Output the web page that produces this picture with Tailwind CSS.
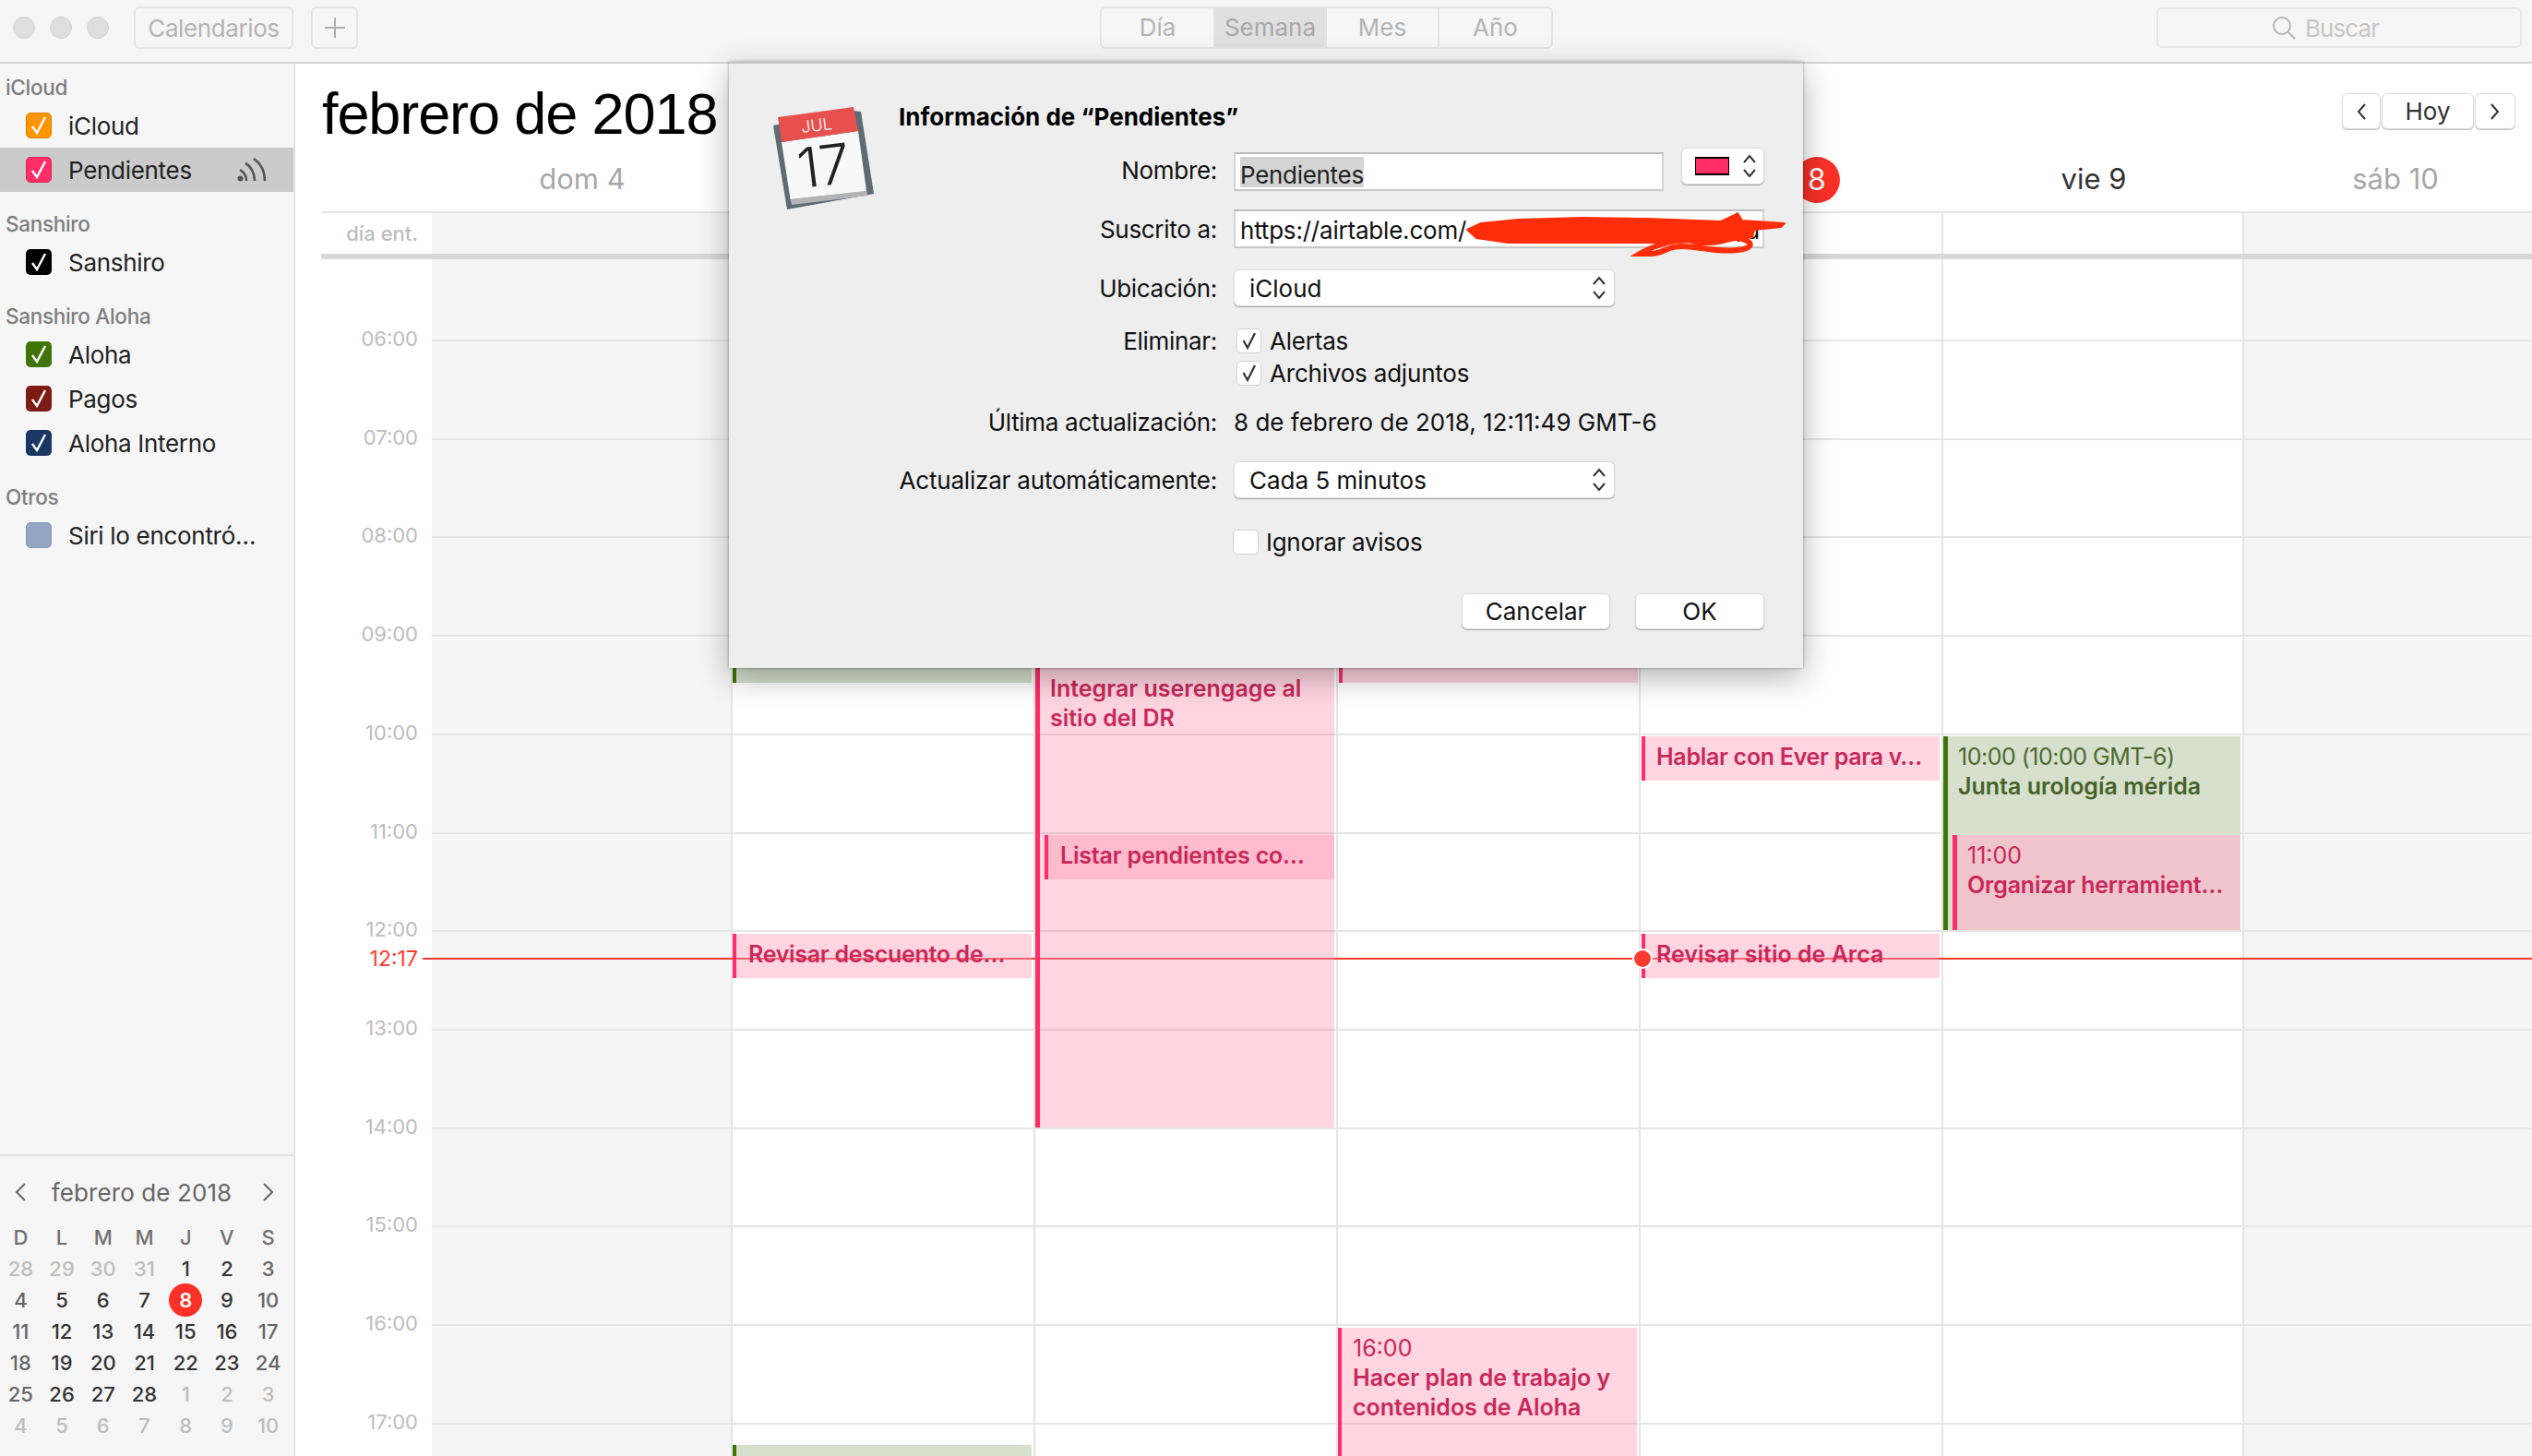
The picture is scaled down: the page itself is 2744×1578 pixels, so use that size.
<!DOCTYPE html>
<html lang="es">
<head>
<meta charset="utf-8">
<title>Calendario</title>
<script src="https://cdn.jsdelivr.net/npm/@tailwindcss/browser@4"></script>
</head>
<body>
<div class="relative w-[2744px] h-[1578px] overflow-hidden flex flex-col bg-white font-['Inter',sans-serif] text-[26px] text-[#222]">

  <!-- toolbar -->
  <header class="h-[69px] shrink-0 flex items-start bg-[#f6f6f6] border-b-2 border-[#d6d6d6] text-[#b4b4b4] relative">
    <div class="flex gap-[16px] pl-[14px] pt-[18px]">
      <span class="w-[24px] h-[24px] rounded-full bg-[#dedede] border border-[#d2d2d2]"></span>
      <span class="w-[24px] h-[24px] rounded-full bg-[#dedede] border border-[#d2d2d2]"></span>
      <span class="w-[24px] h-[24px] rounded-full bg-[#dedede] border border-[#d2d2d2]"></span>
    </div>
    <div class="ml-[27px] mt-[7px] w-[173px] h-[46px] rounded-[6px] border-2 border-[#e4e4e4] flex items-center justify-center tracking-[-0.4px]">Calendarios</div>
    <div class="ml-[19px] mt-[7px] w-[51px] h-[46px] rounded-[6px] border-2 border-[#e4e4e4] flex items-center justify-center">
      <svg width="24" height="24" viewBox="0 0 24 24"><path d="M12 1V23M1 12H23" stroke="#b0b0b0" stroke-width="2" fill="none"/></svg>
    </div>
    <div class="ml-[804px] mt-[7px] w-[491px] h-[46px] rounded-[6px] border-2 border-[#e4e4e4] grid grid-cols-[123px_121px_122px_1fr] overflow-hidden text-center leading-[42px]">
      <div class="border-r-2 border-[#e4e4e4]">Día</div>
      <div class="border-r-2 border-[#e4e4e4] bg-[#e0e0e0] text-[#a8a8a8]">Semana</div>
      <div class="border-r-2 border-[#e4e4e4]">Mes</div>
      <div>Año</div>
    </div>
    <div class="ml-[654px] mt-[8px] w-[396px] h-[44px] rounded-[6px] border-2 border-[#e6e6e6] flex items-center justify-center gap-[10px] text-[#c6c6c6] pr-[30px] tracking-[-0.9px]">
      <svg width="26" height="26" viewBox="0 0 26 26"><circle cx="11" cy="11" r="9" stroke="#b4b4b4" stroke-width="2" fill="none"/><path d="M17.5 17.5L25 25" stroke="#b4b4b4" stroke-width="2"/></svg>
      <span>Buscar</span>
    </div>
  </header>

  <div class="flex flex-1 min-h-0">
    <!-- sidebar -->
    <aside class="w-[320px] shrink-0 bg-[#f6f6f6] border-r-2 border-[#e2e2e2] flex flex-col justify-between tracking-[-0.3px]">
      <div class="pt-[6px]">
        <div class="h-[37px] flex items-center pl-[6px] pt-[2px] text-[22.5px] font-medium text-[#7e7e7e]">iCloud</div>
        <div class="h-[48px] flex items-center pl-[28px] gap-[18px]">
          <span class="w-[28px] h-[28px] rounded-[5px] bg-[#ff9500] border border-[#d87e00] flex items-center justify-center"><svg width="18" height="20" viewBox="0 0 18 20"><path d="M2 11L7 18L16 1" stroke="#fff" stroke-width="2.4" fill="none"/></svg></span>
          <span>iCloud</span>
        </div>
        <div class="h-[48px] flex items-center pl-[28px] gap-[18px] bg-[#cbcbcb] relative">
          <span class="w-[28px] h-[28px] rounded-[5px] bg-[#ff2d68] border border-[#d42556] flex items-center justify-center"><svg width="18" height="20" viewBox="0 0 18 20"><path d="M2 11L7 18L16 1" stroke="#fff" stroke-width="2.4" fill="none"/></svg></span>
          <span>Pendientes</span>
          <svg class="ml-auto mr-[29px]" width="32" height="26" viewBox="0 0 32 26"><circle cx="3.5" cy="22.5" r="3" fill="#555"/><path d="M10 25C10 20 8 16 3 13M19 25C19 17 15 9 9 6M30 25C30 14 25 6 18 1" stroke="#555" stroke-width="2.6" fill="none"/></svg>
        </div>

        <div class="mt-[15px] h-[37px] flex items-center pl-[6px] pt-[2px] text-[22.5px] font-medium text-[#7e7e7e]">Sanshiro</div>
        <div class="h-[48px] flex items-center pl-[28px] gap-[18px]">
          <span class="w-[28px] h-[28px] rounded-[5px] bg-black flex items-center justify-center"><svg width="18" height="20" viewBox="0 0 18 20"><path d="M2 11L7 18L16 1" stroke="#fff" stroke-width="2.4" fill="none"/></svg></span>
          <span>Sanshiro</span>
        </div>

        <div class="mt-[15px] h-[37px] flex items-center pl-[6px] pt-[2px] text-[22.5px] font-medium text-[#7e7e7e]">Sanshiro Aloha</div>
        <div class="h-[48px] flex items-center pl-[28px] gap-[18px]">
          <span class="w-[28px] h-[28px] rounded-[5px] bg-[#3e7506] flex items-center justify-center"><svg width="18" height="20" viewBox="0 0 18 20"><path d="M2 11L7 18L16 1" stroke="#fff" stroke-width="2.4" fill="none"/></svg></span>
          <span>Aloha</span>
        </div>
        <div class="h-[48px] flex items-center pl-[28px] gap-[18px]">
          <span class="w-[28px] h-[28px] rounded-[5px] bg-[#7c1c14] flex items-center justify-center"><svg width="18" height="20" viewBox="0 0 18 20"><path d="M2 11L7 18L16 1" stroke="#fff" stroke-width="2.4" fill="none"/></svg></span>
          <span>Pagos</span>
        </div>
        <div class="h-[48px] flex items-center pl-[28px] gap-[18px]">
          <span class="w-[28px] h-[28px] rounded-[5px] bg-[#1a3764] flex items-center justify-center"><svg width="18" height="20" viewBox="0 0 18 20"><path d="M2 11L7 18L16 1" stroke="#fff" stroke-width="2.4" fill="none"/></svg></span>
          <span>Aloha Interno</span>
        </div>

        <div class="mt-[15px] h-[37px] flex items-center pl-[6px] pt-[2px] text-[22.5px] font-medium text-[#7e7e7e]">Otros</div>
        <div class="h-[48px] flex items-center pl-[28px] gap-[18px]">
          <span class="w-[28px] h-[28px] rounded-[5px] bg-[#94a6c2] border border-[#8598b5]"></span>
          <span>Siri lo encontró…</span>
        </div>
      </div>

      <!-- mini month -->
      <div class="h-[327px] border-t-2 border-[#e2e2e2] pt-[14px]">
        <div class="h-[50px] flex items-center justify-between pl-[15px] pr-[20px] text-[#666] tracking-[0.1px]">
          <svg width="14" height="22" viewBox="0 0 14 22"><path d="M12 2L3 11L12 20" stroke="#666" stroke-width="2" fill="none"/></svg>
          <span class="-translate-x-[3px]">febrero de 2018</span>
          <svg width="14" height="22" viewBox="0 0 14 22"><path d="M2 2L11 11L2 20" stroke="#666" stroke-width="2" fill="none"/></svg>
        </div>
        <div class="mt-[7px] w-[313px] grid grid-cols-7 auto-rows-[34px] items-center text-center text-[22px] font-medium tracking-normal">
          <span class="text-[#707070]">D</span><span class="text-[#707070]">L</span><span class="text-[#707070]">M</span><span class="text-[#707070]">M</span><span class="text-[#707070]">J</span><span class="text-[#707070]">V</span><span class="text-[#707070]">S</span>
          <span class="text-[#bdbdbd]">28</span><span class="text-[#bdbdbd]">29</span><span class="text-[#bdbdbd]">30</span><span class="text-[#bdbdbd]">31</span><span class="text-[#333]">1</span><span class="text-[#333]">2</span><span class="text-[#666]">3</span>
          <span class="text-[#666]">4</span><span class="text-[#333]">5</span><span class="text-[#333]">6</span><span class="text-[#333]">7</span><span class="mx-auto w-[36px] h-[36px] rounded-full bg-[#fb3026] text-white font-semibold leading-[36px]">8</span><span class="text-[#333]">9</span><span class="text-[#666]">10</span>
          <span class="text-[#666]">11</span><span class="text-[#333]">12</span><span class="text-[#333]">13</span><span class="text-[#333]">14</span><span class="text-[#333]">15</span><span class="text-[#333]">16</span><span class="text-[#666]">17</span>
          <span class="text-[#666]">18</span><span class="text-[#333]">19</span><span class="text-[#333]">20</span><span class="text-[#333]">21</span><span class="text-[#333]">22</span><span class="text-[#333]">23</span><span class="text-[#666]">24</span>
          <span class="text-[#666]">25</span><span class="text-[#333]">26</span><span class="text-[#333]">27</span><span class="text-[#333]">28</span><span class="text-[#bdbdbd]">1</span><span class="text-[#bdbdbd]">2</span><span class="text-[#bdbdbd]">3</span>
          <span class="text-[#bdbdbd]">4</span><span class="text-[#bdbdbd]">5</span><span class="text-[#bdbdbd]">6</span><span class="text-[#bdbdbd]">7</span><span class="text-[#bdbdbd]">8</span><span class="text-[#bdbdbd]">9</span><span class="text-[#bdbdbd]">10</span>
        </div>
      </div>
    </aside>

    <!-- main -->
    <main class="flex-1 min-w-0 flex flex-col overflow-hidden">
      <div class="h-[91px] shrink-0 flex justify-between items-start pl-[29px] pr-[18px]">
        <h1 class="text-[63px] leading-[108px] font-normal text-black whitespace-nowrap font-['Liberation_Sans',sans-serif] tracking-[-1.1px]">febrero de 2018</h1>
        <div class="flex gap-[1px] mt-[32px] text-[#333]">
          <span class="w-[42px] h-[39px] rounded-[6px] bg-white border border-[#dcdcdc] shadow-[0_1px_1px_rgba(0,0,0,.25)] flex items-center justify-center"><svg width="12" height="20" viewBox="0 0 12 20"><path d="M10 2L3 10L10 18" stroke="#333" stroke-width="2" fill="none"/></svg></span>
          <span class="w-[100px] h-[39px] rounded-[6px] bg-white border border-[#dcdcdc] shadow-[0_1px_1px_rgba(0,0,0,.25)] flex items-center justify-center">Hoy</span>
          <span class="w-[44px] h-[39px] rounded-[6px] bg-white border border-[#dcdcdc] shadow-[0_1px_1px_rgba(0,0,0,.25)] flex items-center justify-center"><svg width="12" height="20" viewBox="0 0 12 20"><path d="M2 2L9 10L2 18" stroke="#333" stroke-width="2" fill="none"/></svg></span>
        </div>
      </div>

      <!-- day header -->
      <div class="h-[69px] shrink-0 ml-[148px] w-[2292px] grid grid-cols-[326px_328px_328px_328px_328px_326px_328px] items-center text-center text-[31px] text-[#a8a8a8]">
        <div>dom 4</div><div></div><div></div><div></div>
        <div class="flex justify-end pr-[112px]"><span class="w-[50px] h-[50px] rounded-full bg-[#fb3026] text-white text-[32px] leading-[50px]">8</span></div>
        <div class="text-[#333]">vie 9</div>
        <div>sáb 10</div>
      </div>

      <!-- all-day row -->
      <div class="h-[52px] shrink-0 ml-[28px] border-t-2 border-b-[6px] border-t-[#e4e4e4] border-b-[#d8d8d8] flex">
        <div class="w-[120px] shrink-0 text-right pr-[15px] text-[22px] font-medium leading-[44px] text-[#bdbdbd]">día ent.</div>
        <div class="w-[2292px] shrink-0 grid grid-cols-[326px_328px_328px_328px_328px_326px_328px]">
          <div class="bg-[#f5f5f5] border-r-2 border-[#e5e5e5]"></div><div class="border-r-2 border-[#e5e5e5]"></div><div class="border-r-2 border-[#e5e5e5]"></div><div class="border-r-2 border-[#e5e5e5]"></div><div class="border-r-2 border-[#e5e5e5]"></div><div class="border-r-2 border-[#e5e5e5]"></div><div class="bg-[#f5f5f5]"></div>
        </div>
      </div>

      <!-- timeline -->
      <div class="relative flex-1 min-h-0">
        <div class="absolute inset-y-0 left-[148px] w-[2292px] grid grid-cols-[326px_328px_328px_328px_328px_326px_328px]">
          <div class="bg-[#f5f5f5] border-r-2 border-[#e5e5e5]"></div><div class="border-r-2 border-[#e5e5e5]"></div><div class="border-r-2 border-[#e5e5e5]"></div><div class="border-r-2 border-[#e5e5e5]"></div><div class="border-r-2 border-[#e5e5e5]"></div><div class="border-r-2 border-[#e5e5e5]"></div><div class="bg-[#f5f5f5]"></div>
        </div>
        <div class="relative ml-[148px] text-[22px] text-[#bdbdbd]">
          <div class="relative h-[89px] border-b-2 border-[#e5e5e5]"><span class="absolute right-[calc(100%+15px)] -bottom-[16px]">06:00</span></div>
          <div class="relative h-[106.73px] border-b-2 border-[#e5e5e5]"><span class="absolute right-[calc(100%+15px)] -bottom-[16px]">07:00</span></div>
          <div class="relative h-[106.73px] border-b-2 border-[#e5e5e5]"><span class="absolute right-[calc(100%+15px)] -bottom-[16px]">08:00</span></div>
          <div class="relative h-[106.73px] border-b-2 border-[#e5e5e5]"><span class="absolute right-[calc(100%+15px)] -bottom-[16px]">09:00</span></div>
          <div class="relative h-[106.73px] border-b-2 border-[#e5e5e5]"><span class="absolute right-[calc(100%+15px)] -bottom-[16px]">10:00</span></div>
          <div class="relative h-[106.73px] border-b-2 border-[#e5e5e5]"><span class="absolute right-[calc(100%+15px)] -bottom-[16px]">11:00</span></div>
          <div class="relative h-[106.73px] border-b-2 border-[#e5e5e5]"><span class="absolute right-[calc(100%+15px)] -bottom-[16px]">12:00</span></div>
          <div class="relative h-[106.73px] border-b-2 border-[#e5e5e5]"><span class="absolute right-[calc(100%+15px)] -bottom-[16px]">13:00</span></div>
          <div class="relative h-[106.73px] border-b-2 border-[#e5e5e5]"><span class="absolute right-[calc(100%+15px)] -bottom-[16px]">14:00</span></div>
          <div class="relative h-[106.73px] border-b-2 border-[#e5e5e5]"><span class="absolute right-[calc(100%+15px)] -bottom-[16px]">15:00</span></div>
          <div class="relative h-[106.73px] border-b-2 border-[#e5e5e5]"><span class="absolute right-[calc(100%+15px)] -bottom-[16px]">16:00</span></div>
          <div class="relative h-[106.73px] border-b-2 border-[#e5e5e5]"><span class="absolute right-[calc(100%+15px)] -bottom-[16px]">17:00</span></div>
        </div>
      </div>
    </main>
  </div>

  <!-- now line -->
  <div class="absolute left-[458px] top-[1038px] w-[2286px] h-[2px] bg-[linear-gradient(to_right,#ff3b30_0,#ff3b30_336px,#ff7070_336px,#ff7070_660px,#ff3b30_660px,#ff3b30_664px,#ff7070_664px,#ff7070_988px,#ff3b30_988px,#ff3b30_1321px,#ff7070_1321px,#ff7070_1644px,#ff3b30_1644px)]"></div>
  <span class="absolute left-[393px] top-[1026px] w-[60px] text-right text-[23px] leading-[26px] text-[#ff3b30]">12:17</span>

  <!-- events -->
  <div class="absolute left-[794px] top-[690px] w-[324px] h-[50px] bg-[#d6e0cc] border-l-[4px] border-[#3e7506]"></div>
  <div class="absolute left-[1451px] top-[690px] w-[324px] h-[50px] bg-[#ff2d68]/20 border-l-[4px] border-[#ff2d68]"></div>

  <div class="absolute left-[1122px] top-[690px] w-[324px] h-[532px] bg-[#ff2d68]/20 border-l-[5px] border-[#ff2d68] pl-[11px] pt-[40px] text-[25px] leading-[32px] font-semibold text-[#c9285a]">Integrar userengage al<br>sitio del DR</div>
  <div class="absolute left-[1132px] top-[905px] w-[314px] h-[48px] bg-[#ff2d68]/15 border-l-[4px] border-[#ff2d68] pl-[13px] pt-[6px] text-[25px] leading-[32px] font-semibold text-[#c9285a] whitespace-nowrap tracking-[-0.2px]">Listar pendientes co…</div>
  <div class="absolute left-[794px] top-[1012px] w-[324px] h-[48px] bg-[#ff2d68]/20 border-l-[4px] border-[#ff2d68] pl-[13px] pt-[6px] text-[25px] leading-[32px] font-semibold text-[#c9285a] whitespace-nowrap tracking-[-0.3px]">Revisar descuento de…</div>
  <div class="absolute left-[1779px] top-[798px] w-[323px] h-[48px] bg-[#ff2d68]/20 border-l-[4px] border-[#ff2d68] pl-[12px] pt-[6px] text-[25px] leading-[32px] font-semibold text-[#c9285a] whitespace-nowrap tracking-[-0.3px]">Hablar con Ever para v…</div>
  <div class="absolute left-[1779px] top-[1012px] w-[323px] h-[48px] bg-[#ff2d68]/20 border-l-[4px] border-[#ff2d68] pl-[12px] pt-[6px] text-[25px] leading-[32px] font-semibold text-[#c9285a] whitespace-nowrap">Revisar sitio de Arca</div>
  <div class="absolute left-[2106px] top-[798px] w-[322px] h-[210px] bg-[#d6e0cc] border-l-[5px] border-[#3e7506] pl-[11px] pt-[6px] text-[25px] leading-[32px] text-[#4e6a2e]">
    <div class="tracking-[-0.5px]">10:00 (10:00 GMT-6)</div>
    <div class="font-semibold text-[#46622a]">Junta urología mérida</div>
  </div>
  <div class="absolute left-[2116px] top-[905px] w-[312px] h-[103px] bg-[#f0c5cc] border-l-[5px] border-[#ff2d68] pl-[11px] pt-[6px] text-[25px] leading-[32px] text-[#c9285a] whitespace-nowrap">
    <div>11:00</div>
    <div class="font-semibold tracking-[-0.2px]">Organizar herramient…</div>
  </div>
  <div class="absolute left-[1450px] top-[1439px] w-[324px] h-[139px] bg-[#ff2d68]/20 border-l-[4px] border-[#ff2d68] pl-[12px] pt-[6px] text-[25px] leading-[32px] text-[#c9285a]">
    <div>16:00</div>
    <div class="font-semibold">Hacer plan de trabajo y<br>contenidos de Aloha</div>
  </div>
  <div class="absolute left-[794px] top-[1566px] w-[324px] h-[12px] bg-[#d6e0cc] border-l-[4px] border-[#3e7506]"></div>

  <!-- now dot -->
  <span class="absolute left-[1769px] top-[1028px] w-[22px] h-[22px] rounded-full bg-[#ff3b30] border-2 border-white"></span>

  <!-- dialog -->
  <section class="absolute left-[790px] top-[67px] w-[1164px] h-[657px] bg-[#eeeeee] border-t-2 border-[#c4c4c4] shadow-[0_10px_32px_rgba(0,0,0,.3),0_0_3px_rgba(0,0,0,.35)] flex text-[#111]">
    <div class="w-[184px] shrink-0 pl-[47px] pt-[47px]">
      <svg width="110" height="111" viewBox="0 0 110 111">
        <polygon points="1,20 88,4 96,5 110,94 16,111" fill="#5d6b73"/>
        <polygon points="19.5,100 102,91 104,96 21,106" fill="#b4b4b4"/>
        <polygon points="10,38 93,26 102,91 19.5,100" fill="#f8f8f8"/>
        <polygon points="6,11 88,0 93,26 10,38" fill="#e8504e"/>
        <text x="48" y="26" transform="rotate(-7 48 20)" text-anchor="middle" font-family="Inter, sans-serif" font-size="18" font-weight="300" fill="#fff">JUL</text>
        <text x="56" y="85" transform="rotate(-7 56 66)" text-anchor="middle" font-family="Inter, sans-serif" font-size="60" font-weight="300" fill="#222">17</text>
      </svg>
    </div>
    <div class="flex-1 pr-[42px] pt-[42px]">
      <div class="h-[32px] leading-[32px] font-bold text-[26px] text-black">Información de “Pendientes”</div>

      <div class="mt-[22px] flex items-center h-[42px]">
        <label class="w-[345px] text-right tracking-[-0.3px] -translate-y-[2px]">Nombre:</label>
        <div class="ml-[18px] w-[466px] h-[42px] bg-white border-2 border-t-[#bdbdbd] border-x-[#d4d4d4] border-b-[#c8c8c8] pl-[5px] pt-[3px]"><span class="block w-fit h-[33px] bg-[#d4d4d4] pt-[3px] leading-[33px] text-[#222] tracking-[-0.3px]">Pendientes</span></div>
        <div class="ml-[19px] self-start -mt-[5px] w-[90px] h-[40px] rounded-[6px] bg-white border border-[#dcdcdc] shadow-[0_1px_1px_rgba(0,0,0,.3)] flex items-center pl-[14px] gap-[14px]">
          <span class="w-[37px] h-[20px] bg-[#ff2d68] border-y-2 border-x border-black"></span>
          <svg width="16" height="26" viewBox="0 0 16 26"><path d="M2 9L8 2L14 9M2 17L8 24L14 17" stroke="#333" stroke-width="2" fill="none"/></svg>
        </div>
      </div>

      <div class="mt-[20px] flex items-center h-[42px]">
        <label class="w-[345px] text-right tracking-[-0.3px]">Suscrito a:</label>
        <div class="ml-[18px] w-[575px] h-[42px] bg-white border-2 border-t-[#bdbdbd] border-x-[#d4d4d4] border-b-[#c8c8c8] pl-[5px] pr-[3px] pt-[3px] leading-[36px] flex justify-between tracking-[-0.2px]"><span>https://airtable.com/</span><span>/d</span></div>
      </div>

      <div class="mt-[23px] flex items-center h-[40px]">
        <label class="w-[345px] text-right tracking-[-0.3px]">Ubicación:</label>
        <div class="ml-[18px] w-[413px] h-[40px] rounded-[6px] bg-white border border-[#dcdcdc] shadow-[0_1px_1px_rgba(0,0,0,.3)] flex items-center justify-between pl-[16px] pr-[8px]">
          <span>iCloud</span>
          <svg width="16" height="26" viewBox="0 0 16 26"><path d="M2 9L8 2L14 9M2 17L8 24L14 17" stroke="#333" stroke-width="2" fill="none"/></svg>
        </div>
      </div>

      <div class="mt-[23px] flex items-center h-[28px]">
        <label class="w-[345px] text-right tracking-[-0.3px]">Eliminar:</label>
        <span class="ml-[21px] w-[27px] h-[27px] rounded-[5px] bg-white border border-[#d0d0d0] flex items-center justify-center"><svg width="16" height="20" viewBox="0 0 16 20"><path d="M1.5 10L6 18L14 2" stroke="#333" stroke-width="2.2" fill="none"/></svg></span>
        <span class="ml-[9px] tracking-[-0.2px]">Alertas</span>
      </div>
      <div class="mt-[7px] flex items-center h-[28px]">
        <span class="ml-[366px] w-[27px] h-[27px] rounded-[5px] bg-white border border-[#d0d0d0] flex items-center justify-center"><svg width="16" height="20" viewBox="0 0 16 20"><path d="M1.5 10L6 18L14 2" stroke="#333" stroke-width="2.2" fill="none"/></svg></span>
        <span class="ml-[9px] tracking-[-0.2px]">Archivos adjuntos</span>
      </div>

      <div class="mt-[25px] flex items-center h-[28px]">
        <label class="w-[345px] text-right whitespace-nowrap tracking-[-0.3px]">Última actualización:</label>
        <span class="ml-[18px]">8 de febrero de 2018, 12:11:49 GMT-6</span>
      </div>

      <div class="mt-[29px] flex items-center h-[40px]">
        <label class="w-[345px] text-right whitespace-nowrap tracking-[-0.2px]">Actualizar automáticamente:</label>
        <div class="ml-[18px] w-[413px] h-[40px] rounded-[6px] bg-white border border-[#dcdcdc] shadow-[0_1px_1px_rgba(0,0,0,.3)] flex items-center justify-between pl-[16px] pr-[8px]">
          <span>Cada 5 minutos</span>
          <svg width="16" height="26" viewBox="0 0 16 26"><path d="M2 9L8 2L14 9M2 17L8 24L14 17" stroke="#333" stroke-width="2" fill="none"/></svg>
        </div>
      </div>

      <div class="mt-[33px] flex items-center h-[28px]">
        <span class="ml-[362px] w-[28px] h-[27px] rounded-[5px] bg-white border border-[#d0d0d0]"></span>
        <span class="ml-[8px] tracking-[-0.3px]">Ignorar avisos</span>
      </div>

      <div class="mt-[42px] flex justify-end gap-[27px]">
        <div class="w-[161px] h-[39px] rounded-[6px] bg-white border border-[#dcdcdc] shadow-[0_1px_1px_rgba(0,0,0,.3)] flex items-center justify-center">Cancelar</div>
        <div class="w-[140px] h-[39px] rounded-[6px] bg-white border border-[#dcdcdc] shadow-[0_1px_1px_rgba(0,0,0,.3)] flex items-center justify-center">OK</div>
      </div>
    </div>
  </section>

  <!-- redaction scribble -->
  <svg class="absolute left-[1585px] top-[225px]" width="355" height="55" viewBox="0 0 355 55">
    <path d="M5 24L20 17L60 13L130 11L200 12L280 15L295 8L298 6L303 14L349 17L345 21L316 24L314 32L290 36L230 38L190 38L120 38L50 38L15 33Z" fill="#ff2d08" stroke="#ff2d08" stroke-width="2" stroke-linejoin="round"/>
    <path d="M192 50C222 32 270 30 300 33C316 37 316 44 298 46C268 50 240 36 222 45C210 51 204 50 192 50ZM248 36C270 42 292 34 312 26" stroke="#ff2d08" stroke-width="6" fill="none"/>
  </svg>
</div>
</body>
</html>
